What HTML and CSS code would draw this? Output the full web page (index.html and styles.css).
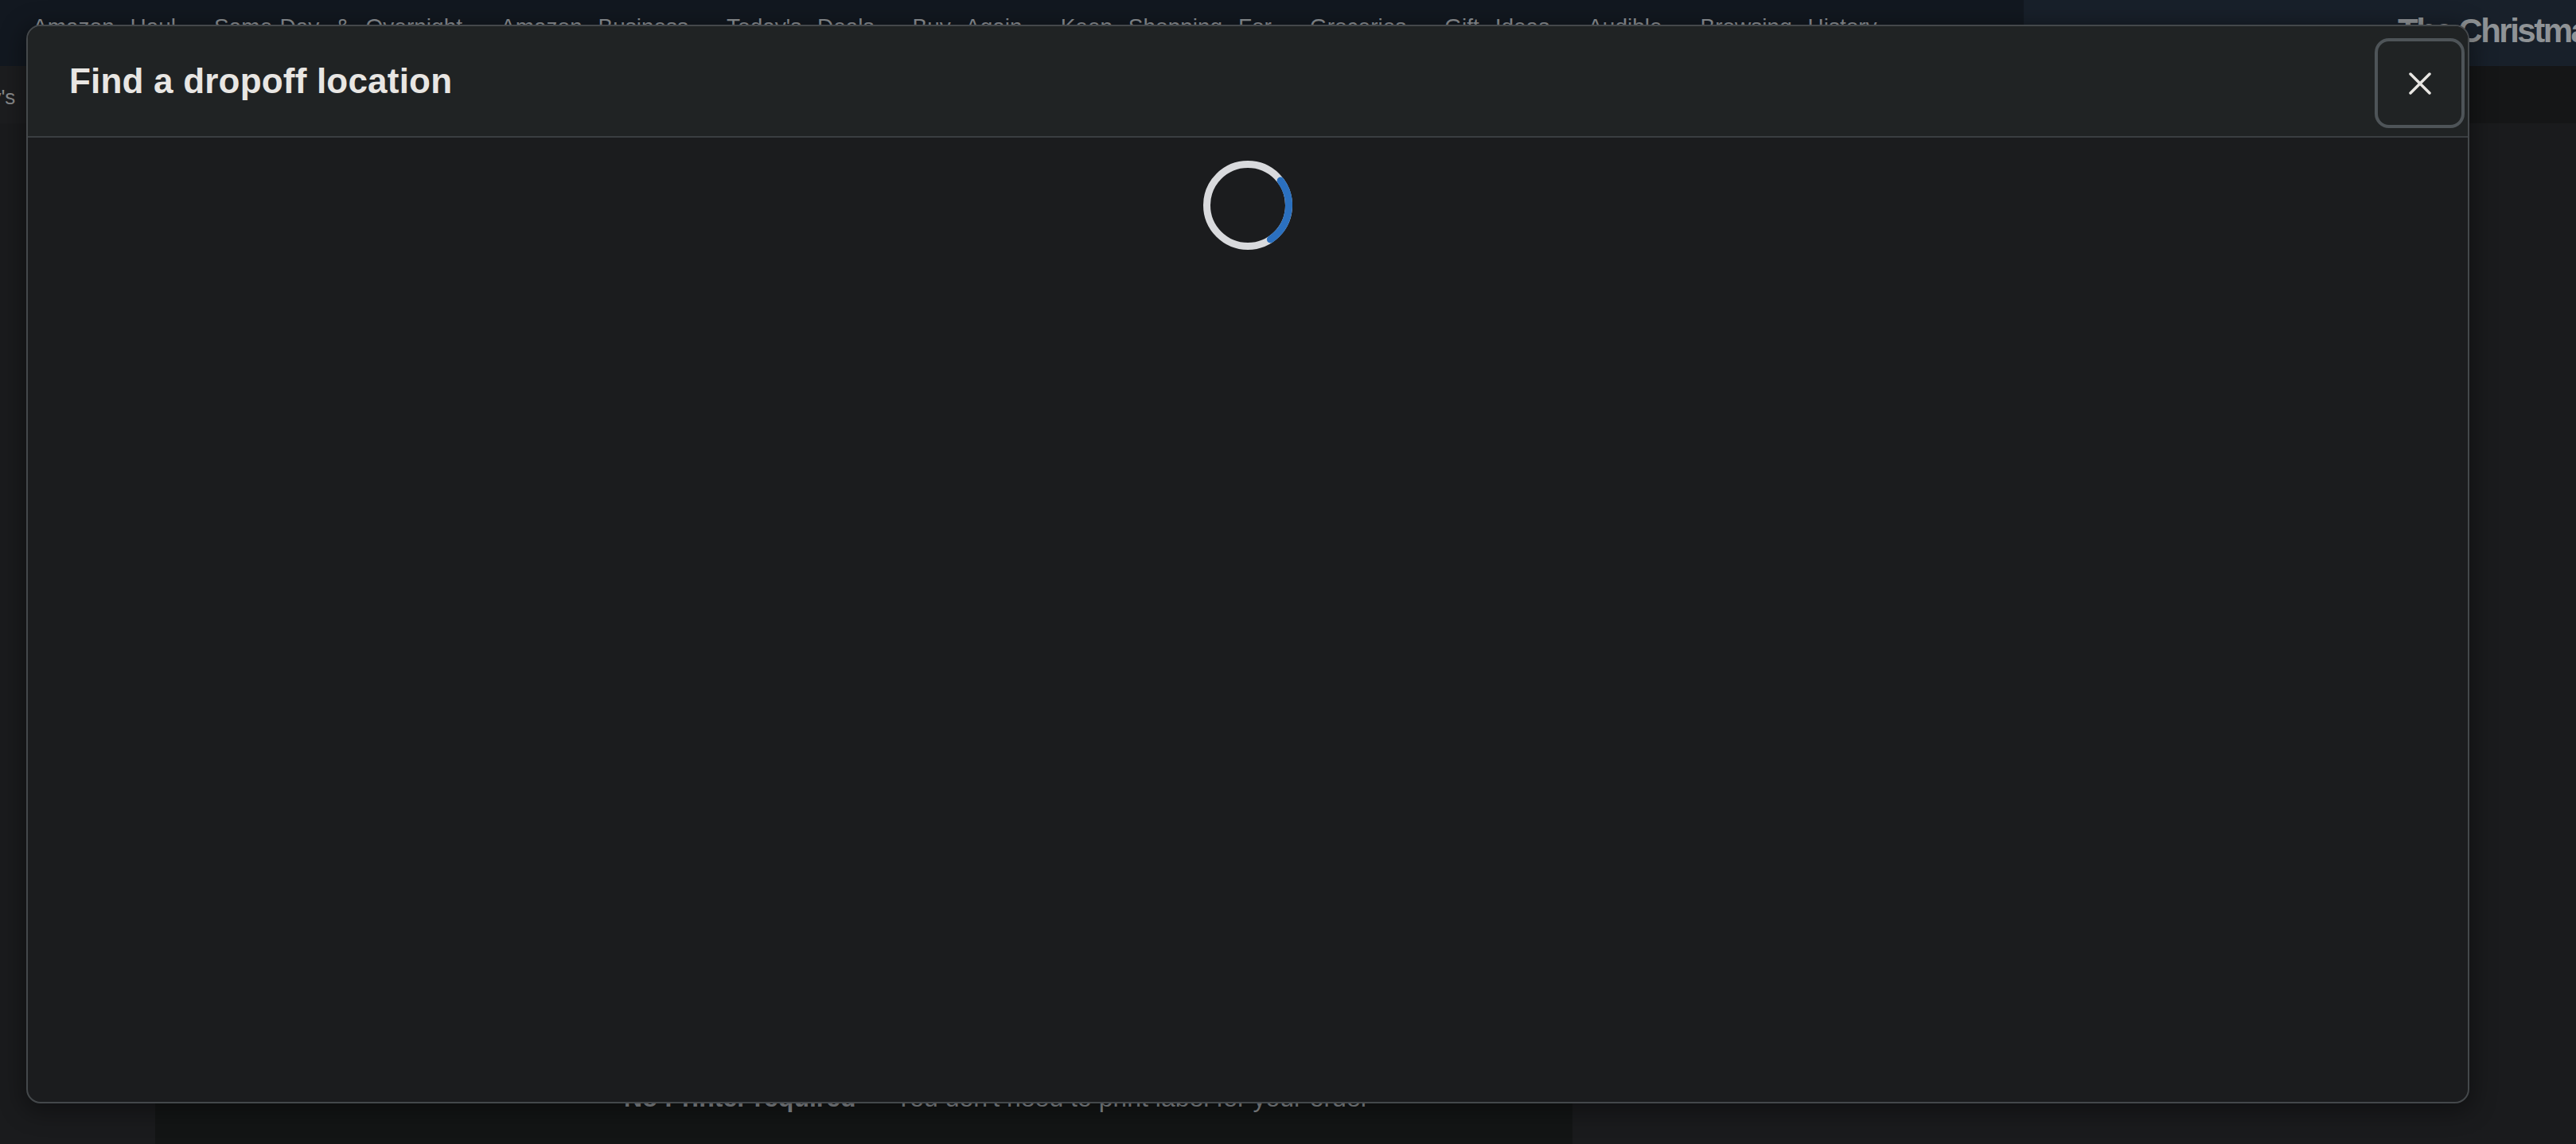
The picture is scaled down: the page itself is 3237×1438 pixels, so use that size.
FILE: index.html
```html
<!DOCTYPE html>
<html lang="en">
<head>
    <meta charset="UTF-8">
    <meta name="viewport" content="width=device-width, initial-scale=1.0">
    <title>Find a dropoff location</title>
    <link rel="stylesheet" href="styles.css">
</head>
<body>
    <div class="page">
        <!-- Top navigation -->
        <header class="nav-top">
            <nav class="nav-links">
                <a href="#">Amazon Haul</a>
                <a href="#">Same-Day &amp; Overnight</a>
                <a href="#">Amazon Business</a>
                <a href="#">Today's Deals</a>
                <a href="#">Buy Again</a>
                <a href="#">Keep Shopping For</a>
                <a href="#">Groceries</a>
                <a href="#">Gift Ideas</a>
                <a href="#">Audible</a>
                <a href="#">Browsing History</a>
            </nav>
            <div class="promo"><span>The Christmas Shop</span></div>
        </header>

        <!-- Sub navigation -->
        <div class="nav-sub">
            <span class="sub-left"><span class="sub-word">Today's</span></span>
        </div>

        <!-- Page content behind the modal -->
        <main class="content">
            <section class="return-panel">
                <p class="no-printer"><strong>No Printer required</strong> — You don't need to print label for your order</p>
            </section>
        </main>
    </div>

    <!-- Dropoff modal -->
    <div class="modal-backdrop">
        <div class="modal" role="dialog" aria-labelledby="modalTitle">
            <div class="modal-header">
                <h2 id="modalTitle">Find a dropoff location</h2>
                <button class="modal-close" aria-label="Close">
                    <svg width="28" height="28" viewBox="0 0 28 28">
                        <path d="M2 2 L26 26 M26 2 L2 26" stroke="#e8e6e3" stroke-width="3.5" stroke-linecap="round" fill="none"/>
                    </svg>
                </button>
            </div>
            <div class="modal-body">
                <svg class="spinner" width="112" height="112" viewBox="0 0 112 112">
                    <circle cx="56" cy="56" r="51.5" stroke="#d9dadd" stroke-width="9" fill="none"/>
                    <circle cx="56" cy="56" r="51.5" stroke="#2b70bf" stroke-width="9" fill="none"
                            stroke-linecap="round" stroke-dasharray="84 400" transform="rotate(-37 56 56)"/>
                </svg>
            </div>
        </div>
    </div>
</body>
</html>
```

FILE: styles.css
```css
body {
    font-family: "Liberation Sans", Arial, sans-serif;
    margin: 0;
    padding: 0;
    width: 3237px;
    height: 1438px;
    overflow: hidden;
    background-color: #1a1b1d;
}
.page {
    display: flex;
    flex-direction: column;
    height: 1438px;
}

/* top nav */
.nav-top {
    display: grid;
    grid-template-columns: 2543px 1fr;
    height: 83px;
    background-color: #121820;
}
.nav-links {
    display: flex;
    gap: 48px;
    padding: 20px 0 0 41px;
    white-space: nowrap;
    overflow: hidden;
}
.nav-links a {
    color: #8d9195;
    font-size: 28px;
    line-height: 28px;
    word-spacing: 12px;
    text-decoration: none;
}
.promo {
    background-color: #18202a;
    padding: 18px 0 0 470px;
    white-space: nowrap;
    overflow: hidden;
}
.promo span {
    color: #8f9396;
    font-size: 42px;
    line-height: 42px;
    font-weight: bold;
    letter-spacing: -2.5px;
}

/* sub nav */
.nav-sub {
    display: flex;
    height: 72px;
    background-color: #151617;
}
.sub-left {
    width: 200px;
    background-color: #1c1d1f;
    overflow: hidden;
    padding-top: 24px;
}
.sub-word {
    display: block;
    margin-left: -68px;
    color: #8a8b8d;
    font-size: 26px;
}

/* content */
.content {
    flex: 1;
    display: flex;
}
.return-panel {
    width: 1781px;
    margin-left: 195px;
    background-color: #131515;
    display: flex;
    flex-direction: column;
    justify-content: flex-end;
    padding: 0 0 39px 589px;
    box-sizing: border-box;
}
.no-printer {
    margin: 0;
    color: #8a8e92;
    font-size: 32px;
    line-height: 38px;
    white-space: nowrap;
}

/* modal */
.modal-backdrop {
    position: fixed;
    inset: 0;
    display: flex;
    padding: 31px 134px 51px 33px;
}
.modal {
    flex: 1;
    display: flex;
    flex-direction: column;
    background-color: #1b1c1e;
    border: 2px solid #44484b;
    border-radius: 18px;
    overflow: hidden;
    box-shadow: 0 6px 28px 6px rgba(0, 0, 0, 0.35);
}
.modal-header {
    display: flex;
    align-items: center;
    justify-content: space-between;
    height: 140px;
    box-sizing: border-box;
    padding: 0 4px 0 52px;
    background-color: #202324;
    border-bottom: 2px solid #3a3e41;
}
.modal-header h2 {
    margin: 0;
    color: #e8e6e3;
    font-size: 44px;
    line-height: 1.2;
    font-weight: bold;
    letter-spacing: 0.2px;
}
.modal-close {
    display: flex;
    align-items: center;
    justify-content: center;
    width: 113px;
    height: 113px;
    margin-top: 5px;
    padding: 0;
    background-color: transparent;
    border: 4px solid #4e5458;
    border-radius: 18px;
    cursor: pointer;
}
.modal-body {
    flex: 1;
    display: flex;
    justify-content: center;
    align-items: flex-start;
    padding-top: 29px;
}
```
